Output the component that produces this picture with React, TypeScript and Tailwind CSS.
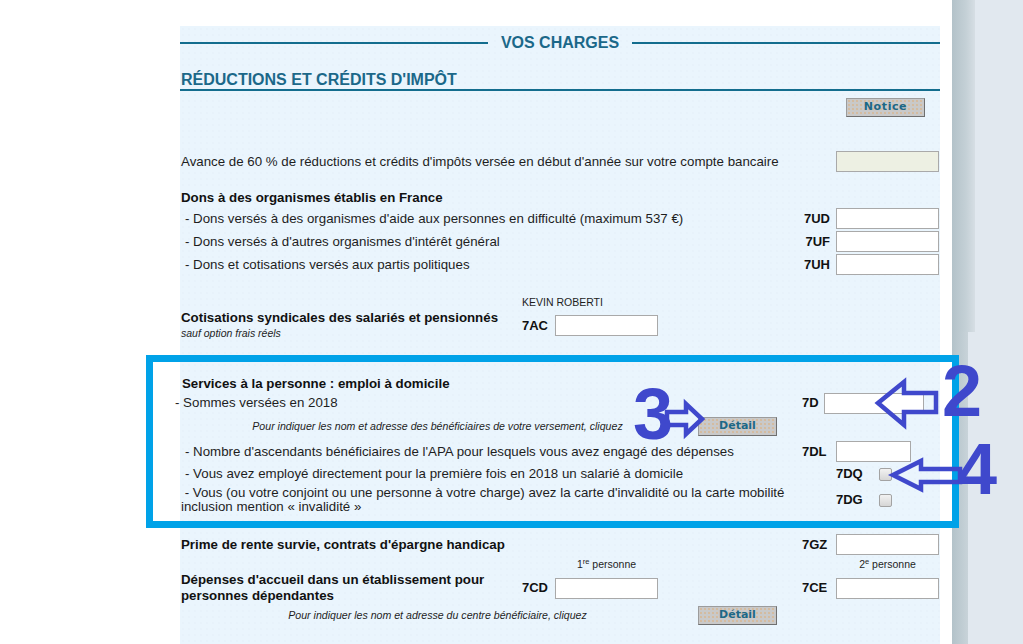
import React from "react";

const font = "font-['Liberation_Sans',Arial,sans-serif]";

function Field({ className = "w-[103px]" }: { className?: string }) {
  return <div className={`h-[21px] shrink-0 border border-[#a9a9a9] bg-white ${className}`} />;
}

function Code({ children }: { children: React.ReactNode }) {
  return <span className="text-[13px] font-bold text-[#111]">{children}</span>;
}

function Checkbox() {
  return (
    <div className="h-[13px] w-[13px] shrink-0 rounded-[2px] border border-[#a3a3a3] bg-[linear-gradient(#f2f2f2,#d6d6d6)]" />
  );
}

function GreyButton({ label, className = "" }: { label: string; className?: string }) {
  return (
    <div
      className={`flex h-[19px] w-[79px] shrink-0 items-center justify-center border border-[#9c9c9c] border-b-[#6f6f6f] border-r-[#6f6f6f] bg-[#c9c9c9] bg-[radial-gradient(circle,#d9b48a_0.6px,transparent_0.9px)] bg-[length:4px_4px] font-['DejaVu_Sans',Verdana,sans-serif] text-[11px] font-bold text-[#1c6887] ${className}`}
    >
      {label}
    </div>
  );
}

export default function App() {
  return (
    <div className={`relative flex h-[644px] w-[1023px] overflow-hidden bg-white ${font} text-[13.3px] text-[#1e1e1e]`}>
      <div className="w-[952px] shrink-0 pl-[180px] pt-[26px]">
        <div className="h-[618px] w-[760px] bg-[#eaf5fd] bg-[radial-gradient(circle,#e0ecf5_0.5px,transparent_0.8px)] bg-[length:6px_6px]">
          {/* section header */}
          <div className="flex h-[34px] items-center">
            <div className="h-[2px] flex-1 bg-[#136d8e]" />
            <span className="px-[13px] text-[16px] font-bold text-[#1b6889]">VOS CHARGES</span>
            <div className="h-[2px] flex-1 bg-[#136d8e]" />
          </div>
          <div className="border-b-2 border-[#136d8e] pl-px pt-[10px] text-[16px] leading-[19px] font-bold text-[#1b6889]">
            RÉDUCTIONS ET CRÉDITS D'IMPÔT
          </div>

          <div className="px-px">
            <div className="mt-[7px] flex justify-end pr-[14px]">
              <GreyButton label="Notice" className="tracking-[0.6px]" />
            </div>

            {/* avance */}
            <div className="mt-[33px] flex h-[23px] items-center">
              <span className="flex-1">
                Avance de 60 % de réductions et crédits d'impôts versée en début d'année sur votre compte bancaire
              </span>
              <Field className="w-[103px] !bg-[#edf0e3]" />
            </div>

            {/* dons */}
            <div className="mt-[16px] h-[18px] leading-[18px] font-bold text-[#111]">
              Dons à des organismes établis en France
            </div>
            {[
              ["- Dons versés à des organismes d'aide aux personnes en difficulté (maximum 537 €)", "7UD"],
              ["- Dons versés à d'autres organismes d'intérêt général", "7UF"],
              ["- Dons et cotisations versés aux partis politiques", "7UH"],
            ].map(([label, code]) => (
              <div key={code} className="flex h-[23px] items-center">
                <span className="flex-1 pl-[4px]">{label}</span>
                <div className="flex w-[137px] items-center justify-end gap-[6px]">
                  <Code>{code}</Code>
                  <Field />
                </div>
              </div>
            ))}

            {/* cotisations syndicales */}
            <div className="mt-[20px] flex h-[45px] items-start">
              <div className="mt-[14px] w-[341px]">
                <div className="h-[16px] leading-[16px] font-bold text-[#111]">
                  Cotisations syndicales des salariés et pensionnés
                </div>
                <div className="h-[14px] text-[10.5px] leading-[14px] italic">sauf option frais réels</div>
              </div>
              <div>
                <div className="h-[13px] text-[10.5px] leading-[13px]">KEVIN ROBERTI</div>
                <div className="mt-[5px] flex h-[23px] items-center gap-[7px]">
                  <Code>7AC</Code>
                  <Field />
                </div>
              </div>
            </div>

            {/* services à la personne */}
            <div className="mt-[35px] h-[16px] pl-px leading-[16px] font-bold text-[#111]">
              Services à la personne : emploi à domicile
            </div>
            <div className="flex h-[22px] items-center">
              <span className="-ml-[6px] flex-1">- Sommes versées en 2018</span>
              <div className="flex w-[137px] items-center">
                <Code>7D</Code>
                <Field className="ml-[5px] w-[100px]" />
              </div>
            </div>
            <div className="mt-[3px] flex h-[19px] items-center">
              <span className="w-[513px] text-center text-[10.6px] italic">
                Pour indiquer les nom et adresse des bénéficiaires de votre versement, cliquez
              </span>
              <GreyButton label="Détail" className="ml-[4px]" />
            </div>
            <div className="mt-[5px] flex h-[21px] items-center">
              <span className="flex-1 pl-[4px]">
                - Nombre d'ascendants bénéficiaires de l'APA pour lesquels vous avez engagé des dépenses
              </span>
              <div className="flex w-[137px] items-center">
                <Code>7DL</Code>
                <Field className="ml-[9px] w-[75px]" />
              </div>
            </div>
            <div className="mt-[2px] flex h-[20px] items-center">
              <span className="flex-1 pl-[4px]">
                - Vous avez employé directement pour la première fois en 2018 un salarié à domicile
              </span>
              <div className="flex w-[137px] items-center pl-[34px]">
                <Code>7DQ</Code>
                <div className="ml-[16px]">
                  <Checkbox />
                </div>
              </div>
            </div>
            <div className="mt-[2px] flex h-[28px] items-center">
              <span className="flex-1 pr-[8px] leading-[14px]">
                &nbsp;- Vous (ou votre conjoint ou une personne à votre charge) avez la carte d'invalidité ou la carte mobilité inclusion mention « invalidité »
              </span>
              <div className="flex w-[137px] items-center pl-[34px]">
                <Code>7DG</Code>
                <div className="ml-[16px]">
                  <Checkbox />
                </div>
              </div>
            </div>

            {/* prime de rente survie */}
            <div className="mt-[19px] flex h-[23px] items-center">
              <span className="flex-1 font-bold text-[#111]">Prime de rente survie, contrats d'épargne handicap</span>
              <div className="flex w-[137px] items-center justify-between">
                <Code>7GZ</Code>
                <Field />
              </div>
            </div>

            {/* dépenses d'accueil */}
            <div className="mt-[2px] flex h-[14px] items-center text-[10.5px]">
              <span className="ml-[374px] w-[103px] text-center">
                1<sup className="text-[7.5px]">re</sup> personne
              </span>
              <span className="ml-auto w-[103px] text-center">
                2<sup className="text-[7.5px]">e</sup> personne
              </span>
            </div>
            <div className="flex h-[32px] items-center">
              <div className="w-[341px] leading-[16px] font-bold text-[#111]">
                Dépenses d'accueil dans un établissement pour
                <br />
                personnes dépendantes
              </div>
              <div className="flex items-center gap-[7px]">
                <Code>7CD</Code>
                <Field />
              </div>
              <div className="ml-auto flex w-[137px] items-center justify-between">
                <Code>7CE</Code>
                <Field />
              </div>
            </div>
            <div className="mt-[2px] flex h-[19px] items-center">
              <span className="w-[513px] text-center text-[10.6px] italic">
                Pour indiquer les nom et adresse du centre bénéficiaire, cliquez
              </span>
              <GreyButton label="Détail" className="ml-[4px]" />
            </div>
          </div>
        </div>
      </div>

      {/* right scroll gutter */}
      <div className="flex flex-1 flex-col bg-[#e1e8ef]">
        <div className="h-[332px] w-[23px] bg-[linear-gradient(to_right,#b3c2c9,#c4d0d6_60%,#d6dee4)]" />
        <div className="w-[16px] flex-1 bg-[linear-gradient(to_right,#b3c2c9,#c8d3d9)]" />
      </div>

      {/* annotations */}
      <div className="pointer-events-none absolute left-[146px] top-[355px] h-[173px] w-[813px] border-[7px] border-[#00a2e8]" />
      <svg className="pointer-events-none absolute left-0 top-0" width="1023" height="644">
        <g fill="none" stroke="#3f48cc" strokeWidth="4.5" strokeLinejoin="miter">
          <polygon points="667,412 686,412 686,404 702,419 686,434 686,425 667,425" />
          <polygon points="878,403 904,382 904,393 936,393 936,412 904,412 904,425" />
          <polygon points="893,475 921,461 921,469 960,469 960,482 921,482 921,489" />
        </g>
      </svg>
      <span className="pointer-events-none absolute left-[633px] top-[388px] text-[72px] leading-[52px] font-bold text-[#3f48cc]">3</span>
      <span className="pointer-events-none absolute left-[942px] top-[365px] text-[72px] leading-[52px] font-bold text-[#3f48cc]">2</span>
      <span className="pointer-events-none absolute left-[957px] top-[443px] text-[72px] leading-[52px] font-bold text-[#3f48cc]">4</span>
    </div>
  );
}
